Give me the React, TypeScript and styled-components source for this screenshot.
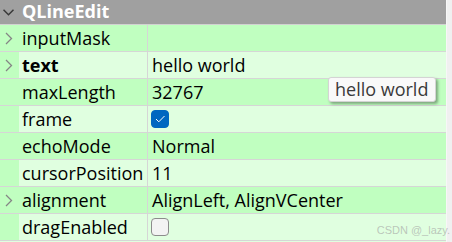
import React from "react";
import styled, { createGlobalStyle } from "styled-components";

const Global = createGlobalStyle`
  html, body { margin: 0; padding: 0; background: #f0f0f0; }
  body { font-family: "Open Sans", "Noto Sans", sans-serif; }
`;

const Page = styled.div`
  position: relative;
  display: flex;
  width: 452px;
  height: 242px;
  overflow: hidden;
`;

const Table = styled.div`
  width: 446px;
  display: flex;
  flex-direction: column;
  background: #e0ffe0;
`;

const Strip = styled.div`
  flex: 1;
  background: #f0f0f0;
  border-left: 1px solid #f7f7f7;
`;

const Header = styled.div`
  height: 24px;
  border-bottom: 1px solid #d2d2d2;
  background: #a0a0a0;
  display: flex;
  align-items: center;
  color: #ffffff;
  font-weight: 700;
  font-size: 18px;
  line-height: 24px;
`;

const HeaderBranch = styled.div`
  width: 22px;
  height: 24px;
  display: flex;
  align-items: center;
  justify-content: center;
  padding-right: 6px;
  box-sizing: border-box;
`;

const HeaderTitle = styled.span`
  margin-top: -3px;
`;

const Row = styled.div<{ $alt: boolean }>`
  height: 26px;
  border-bottom: 1px solid #d6d6d6;
  display: flex;
  background: ${(p) => (p.$alt ? "#e0ffe0" : "#c0ffc0")};
  font-size: 18px;
  line-height: 26px;
  color: #000;
`;

const Branch = styled.div`
  width: 19px;
  flex: none;
  background: #c0ffc0;
  display: flex;
  align-items: center;
  padding-left: 5px;
  box-sizing: border-box;
`;

const Name = styled.div<{ $bold?: boolean }>`
  width: 129px;
  flex: none;
  box-sizing: border-box;
  padding-left: 3px;
  border-right: 1px solid #d6d6d6;
  font-weight: ${(p) => (p.$bold ? 700 : 400)};
  white-space: nowrap;
  overflow: hidden;
`;

const Value = styled.div`
  flex: 1;
  padding-left: 4px;
  display: flex;
  align-items: center;
  white-space: nowrap;
`;

const CheckBox = styled.div<{ $checked: boolean }>`
  width: 18px;
  height: 18px;
  box-sizing: border-box;
  border-radius: 4px;
  margin-left: -1px;
  background: ${(p) => (p.$checked ? "#0067c0" : "#f3f3f3")};
  border: 1px solid ${(p) => (p.$checked ? "#0067c0" : "#8c8c8c")};
  display: flex;
  align-items: center;
  justify-content: center;
`;

const Tooltip = styled.div`
  position: absolute;
  left: 328px;
  top: 77px;
  height: 25px;
  box-sizing: border-box;
  padding: 0 7px 0 6px;
  background: #f9f9f9;
  border: 1px solid #d4d4d4;
  border-radius: 3px;
  box-shadow: 2px 2px 3px rgba(0, 0, 0, 0.35);
  font-size: 18px;
  line-height: 22px;
  color: #3a3a3a;
  white-space: nowrap;
`;

const Watermark = styled.div`
  position: absolute;
  right: 2px;
  bottom: 6px;
  font-family: "Liberation Sans", Arial, sans-serif;
  font-size: 11px;
  color: rgba(160, 160, 160, 0.6);
`;

const ChevronRight = () => (
  <svg width="8" height="13" viewBox="0 0 8 13">
    <path d="M1 1 L6.5 6.5 L1 12" fill="none" stroke="#858585" strokeWidth="1.3" />
  </svg>
);

const ChevronDown = () => (
  <svg width="11" height="7" viewBox="0 0 11 7">
    <path d="M0.5 0.8 L5.5 5.8 L10.5 0.8" fill="none" stroke="#383838" strokeWidth="1.5" />
  </svg>
);

const Check = () => (
  <svg width="12" height="10" viewBox="0 0 12 10">
    <path d="M2 5 L4.8 7.8 L10.5 2" fill="none" stroke="#ffffff" strokeWidth="1" />
  </svg>
);

type Prop = {
  name: string;
  value?: string;
  check?: boolean;
  expandable?: boolean;
  bold?: boolean;
};

const props: Prop[] = [
  { name: "inputMask", value: "", expandable: true },
  { name: "text", value: "hello world", expandable: true, bold: true },
  { name: "maxLength", value: "32767" },
  { name: "frame", check: true },
  { name: "echoMode", value: "Normal" },
  { name: "cursorPosition", value: "11" },
  { name: "alignment", value: "AlignLeft, AlignVCenter", expandable: true },
  { name: "dragEnabled", check: false },
];

export default function App() {
  return (
    <Page>
      <Global />
      <Table>
        <Header>
          <HeaderBranch>
            <ChevronDown />
          </HeaderBranch>
          <HeaderTitle>QLineEdit</HeaderTitle>
        </Header>
        {props.map((p, i) => (
          <Row key={p.name} $alt={i % 2 === 1}>
            <Branch>{p.expandable ? <ChevronRight /> : null}</Branch>
            <Name $bold={p.bold}>{p.name}</Name>
            <Value>
              {p.check !== undefined ? (
                <CheckBox $checked={p.check}>{p.check ? <Check /> : null}</CheckBox>
              ) : (
                p.value
              )}
            </Value>
          </Row>
        ))}
      </Table>
      <Strip />
      <Tooltip>hello world</Tooltip>
      <Watermark>CSDN @_lazy.</Watermark>
    </Page>
  );
}
